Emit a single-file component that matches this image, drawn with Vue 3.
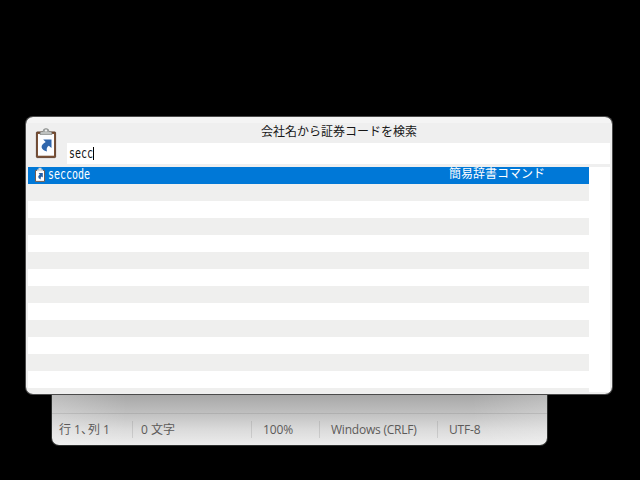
<script setup>
import { ref } from 'vue'

const query = ref('secc')
const rows = ref([
  { name: 'seccode', kind: '簡易辞書コマンド' },
  ...Array.from({ length: 13 }, () => null),
])
</script>

<template>
  <main class="desktop">
    <section class="editor">
      <footer class="status">
        <span class="cell position">行 1<span class="comma">、</span>列 1</span>
        <span class="cell count">0 文字</span>
        <span class="cell zoom">100%</span>
        <span class="cell newline">Windows (CRLF)</span>
        <span class="cell encoding">UTF-8</span>
      </footer>
    </section>

    <section class="launcher">
      <svg width="0" height="0" class="defs">
        <symbol id="clipboard" viewBox="0 0 22 31">
          <rect x="1.4" y="3.9" width="19.2" height="25.7" rx=".8" fill="#7b5034" stroke="#50301e" stroke-width=".8" />
          <rect x="3" y="6" width="16" height="21.5" fill="#fcfdff" />
          <path d="M3 27.5h16" stroke="#d5cbc5" />
          <path d="M5 6.5V5Q5 3.5 8 3.5Q8 .6 11 .6T14 3.5Q17 3.5 17 5V6.5Z" fill="#a5a9a8" stroke="#7d8180" stroke-width=".6" />
          <path d="M6 5h10" stroke="#d6d8d7" />
          <circle cx="11" cy="2.6" r="1.1" fill="#eeeeee" />
          <path d="M8.2 11.5H16.5V20L13.8 17.7Q10.8 19.5 12 23.6Q7 22.2 6.6 19.3Q6.4 16.3 10.7 14.1Z" fill="#2f66ad" />
        </symbol>
      </svg>
      <header class="head">
        <svg class="icon"><use href="#clipboard" /></svg>
        <div class="fields">
          <h1 class="title">会社名から証券コードを検索</h1>
          <div class="query"><span class="narrow">{{ query }}</span><i class="caret"></i></div>
        </div>
      </header>
      <div class="results">
        <div v-for="(row, i) in rows" :key="i" class="row" :class="{ selected: i === 0 }">
          <template v-if="row">
            <svg class="mini" viewBox="0 0 10 15">
              <path d="M.5 3.4h9v11H.5Z" fill="#fff" stroke="#70513f" stroke-width=".9" />
              <path d="M2 4.3V2.6h1.5V.8h3v1.8H8v1.7Z" fill="#d5d6d6" />
              <path d="M3.6 6h4.2v4.6L6.6 9.5q-1.3.8-.9 2.9Q3 11.5 3.2 9.8q0-1.3 1.6-2.4Z" fill="#2460a7" />
            </svg>
            <span class="narrow name">{{ row.name }}</span>
            <span class="kind">{{ row.kind }}</span>
          </template>
        </div>
      </div>
    </section>
  </main>
</template>

<style>
body { margin: 0; background: #000; }
</style>

<style scoped>
.desktop {
  position: relative;
  width: 640px;
  height: 480px;
  overflow: hidden;
  background: #000;
  font-family: "Noto Sans CJK JP", sans-serif;
}
.editor {
  position: absolute;
  left: 52px;
  top: 360px;
  width: 495px;
  height: 85px;
  display: flex;
  flex-direction: column;
  justify-content: flex-end;
  box-sizing: border-box;
  border-radius: 0 0 7px 7px;
  background:
    linear-gradient(90deg, rgba(255,255,255,.24), transparent 75px, transparent 420px, rgba(255,255,255,.2)),
    linear-gradient(#a6a6a6 34px, #bebebe 52px, #dadada 69px, #ececec 85px);
  box-shadow: 0 0 0 1px #2d2f2e;
}
.status {
  display: flex;
  align-items: center;
  box-sizing: border-box;
  height: 32px;
  border-top: 1px solid rgba(90,90,90,.16);
  font-family: "Open Sans", "Noto Sans CJK JP", sans-serif;
  font-size: 12px;
  line-height: 17px;
  color: #5c5a59;
  white-space: pre;
}
.cell {
  box-sizing: border-box;
  height: 17px;
  padding-left: 8px;
  border-right: 1px solid rgba(110,110,110,.2);
}
.position { width: 81px; padding-left: 7px; }
.comma { font-feature-settings: "halt"; margin-right: 1px; }
.count { width: 119px; }
.zoom { width: 68px; padding-left: 11px; letter-spacing: -.15px; }
.newline { width: 118px; padding-left: 11px; letter-spacing: -.22px; }
.encoding { padding-left: 11px; border: 0; letter-spacing: -.15px; }
.launcher {
  position: absolute;
  left: 26px;
  top: 117px;
  width: 586px;
  height: 277px;
  display: flex;
  flex-direction: column;
  box-sizing: border-box;
  padding: 0 2px 2px;
  overflow: hidden;
  border-radius: 7px;
  background: linear-gradient(#f4f4f4 6px, #efefef 6px);
  box-shadow: 0 0 0 1px #4b4b4b;
}
.defs { position: absolute; }
.head { display: flex; height: 50px; flex: none; }
.icon { width: 22px; height: 31px; margin: 11px 10px 0 7px; flex: none; }
.fields { flex: 1; }
.title {
  height: 26px;
  margin: 0;
  padding-left: 1px;
  font-size: 12px;
  line-height: 28px;
  font-weight: 400;
  text-align: center;
  color: #161616;
  white-space: nowrap;
  box-sizing: border-box;
}
.query {
  display: flex;
  align-items: center;
  height: 21px;
  padding-left: 2px;
  background: #fff;
  color: #111;
}
.narrow {
  display: block;
  font-family: "DejaVu Sans Mono", monospace;
  font-size: 14px;
  line-height: 17px;
  transform-origin: left;
  transform: scaleX(.712);
}
.query .narrow { width: 24px; }
.caret { width: 1px; height: 13px; background: #000; }
.results { flex: 1; overflow: hidden; background: #fff; }
.row { display: flex; width: 561px; height: 17px; background: #fff; }
.row:nth-child(even) { background: #efefee; }
.row.selected { background: #0078d7; color: #fff; }
.mini { width: 10px; height: 15px; margin: 0 3px 0 7px; flex: none; }
.name { width: 401px; flex: none; line-height: 14px; }
.kind { font-size: 12px; line-height: 12px; white-space: nowrap; }
</style>
